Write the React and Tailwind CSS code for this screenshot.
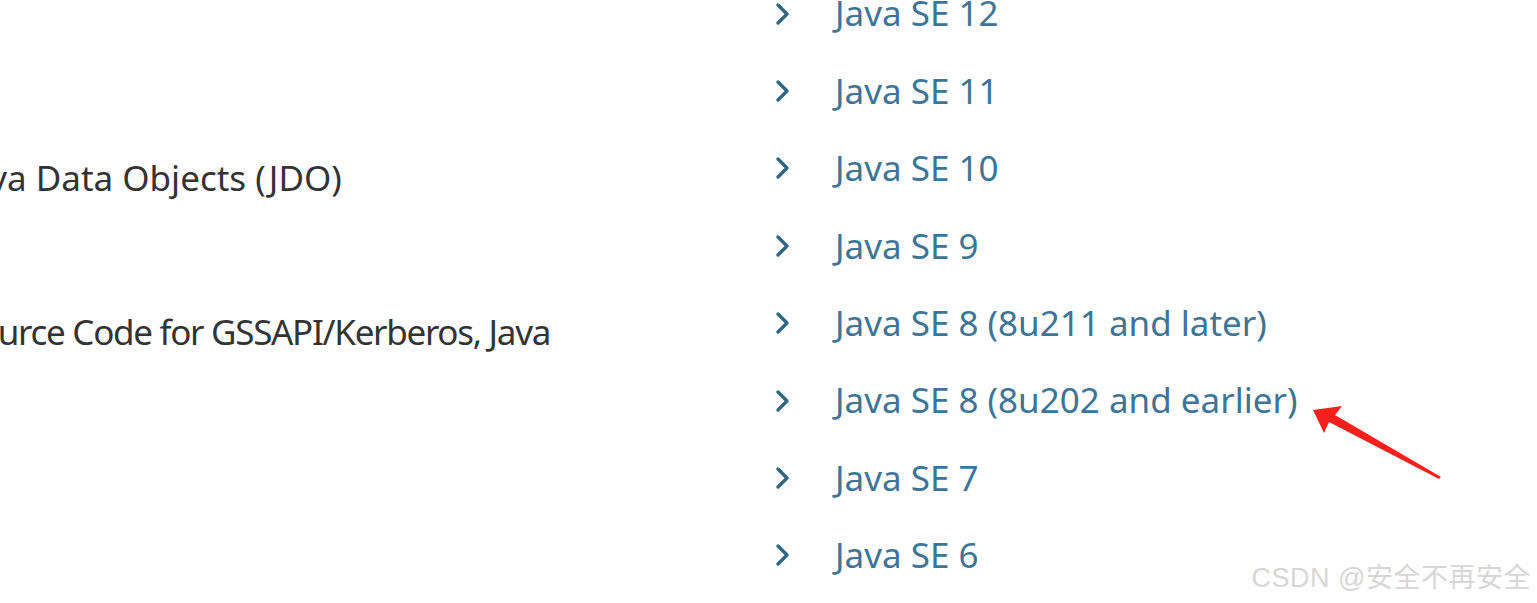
const versions = [
  'Java SE 12',
  'Java SE 11',
  'Java SE 10',
  'Java SE 9',
  'Java SE 8 (8u211 and later)',
  'Java SE 8 (8u202 and earlier)',
  'Java SE 7',
  'Java SE 6',
];

function Chevron() {
  return (
    <svg width="16" height="24" viewBox="0 0 16 24" className="shrink-0">
      <path d="M3 3 L12 12 L3 21" fill="none" stroke="#2f6684" strokeWidth="3.4" strokeLinecap="round" strokeLinejoin="round" />
    </svg>
  );
}

export default function App() {
  return (
    <div className="relative h-[603px] w-[1537px] overflow-hidden bg-white" style={{ fontFamily: '"Noto Sans", "Open Sans", sans-serif' }}>
      <div className="flex">
        <div className="w-[775px] shrink-0 overflow-hidden">
          <div className="-ml-[40px] flex flex-col pt-[155px] text-[35px] leading-[46px] text-[#333333]">
            <p className="whitespace-nowrap">Java Data Objects (JDO)</p>
            <p className="mt-[108px] whitespace-nowrap tracking-[-1.3px]">Source Code for GSSAPI/Kerberos, Java</p>
          </div>
        </div>
        <ul className="-mt-[25px] flex flex-col">
          {versions.map((v) => (
            <li key={v} className="flex h-[77.4px] items-center">
              <Chevron />
              <a className="ml-[44px] whitespace-nowrap text-[35px] text-[#3c7596]">{v}</a>
            </li>
          ))}
        </ul>
      </div>

      <svg className="absolute left-[1300px] top-[398px]" width="150" height="90" viewBox="0 0 150 90">
        <polygon points="13,12 42,8 35,17 141,79 139,81 29,24 24,35" fill="#f5201c" />
      </svg>

      <div className="absolute right-[6px] top-[558px] text-[27px] tracking-[0.5px] text-[#d6d6d6]" style={{ fontFamily: '"Liberation Sans", "Noto Sans CJK SC", sans-serif' }}>
        CSDN @安全不再安全
      </div>
    </div>
  );
}
